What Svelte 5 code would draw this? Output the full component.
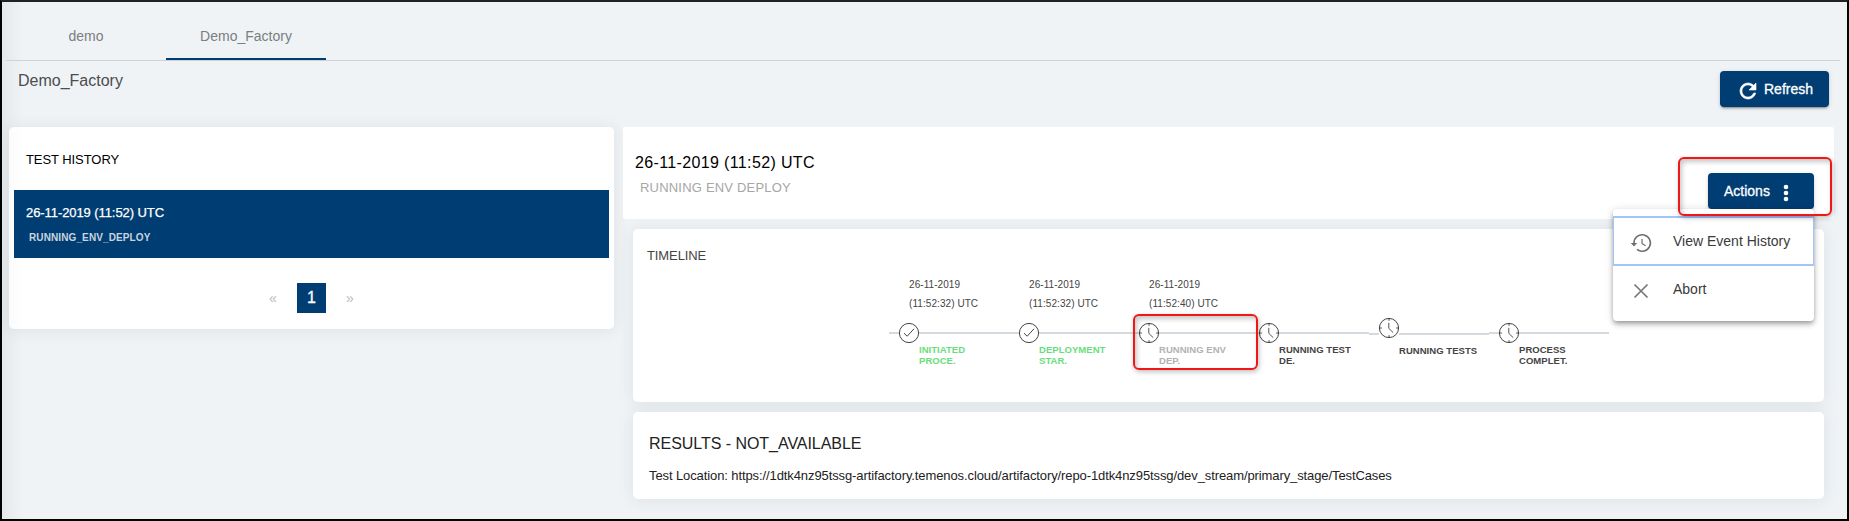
<script>
  const tabs = [
    { name: 'demo', active: false },
    { name: 'Demo_Factory', active: true }
  ];
  const steps = [
    { date: '26-11-2019', time: '(11:52:32) UTC', lines: ['INITIATED', 'PROCE.'], state: 'done' },
    { date: '26-11-2019', time: '(11:52:32) UTC', lines: ['DEPLOYMENT', 'STAR.'], state: 'done' },
    { date: '26-11-2019', time: '(11:52:40) UTC', lines: ['RUNNING ENV', 'DEP.'], state: 'running' },
    { date: '', time: '', lines: ['RUNNING TEST', 'DE.'], state: 'pending' },
    { date: '', time: '', lines: ['RUNNING TESTS'], state: 'pending' },
    { date: '', time: '', lines: ['PROCESS', 'COMPLET.'], state: 'pending' }
  ];
</script>

<div class="page">
  <nav class="tabs">
    {#each tabs as tab}
      <div class="tab" class:active={tab.active}>{tab.name}</div>
    {/each}
  </nav>

  <header class="titlebar">
    <h1>Demo_Factory</h1>
    <button class="btn refresh">
      <svg width="24" height="24" viewBox="0 0 24 24"><path fill="#fff" d="M17.65 6.35C16.2 4.9 14.21 4 12 4c-4.42 0-7.99 3.58-7.99 8s3.57 8 7.99 8c3.73 0 6.84-2.55 7.73-6h-2.08c-.82 2.33-3.04 4-5.65 4-3.31 0-6-2.69-6-6s2.69-6 6-6c1.66 0 3.14.69 4.22 1.78L13 11h7V4l-2.35 2.35z" stroke="#fff" stroke-width=".6" /></svg>
      <span>Refresh</span>
    </button>
  </header>

  <main class="columns">
    <section class="card history">
      <h2>TEST HISTORY</h2>
      <div class="entry">
        <div class="entry-date">26-11-2019 (11:52) UTC</div>
        <div class="entry-state">RUNNING_ENV_DEPLOY</div>
      </div>
      <div class="pager">
        <span class="arrow">«</span>
        <span class="current">1</span>
        <span class="arrow">»</span>
      </div>
    </section>

    <section class="details">
      <div class="summary">
        <div class="summary-text">
          <div class="run-date">26-11-2019 (11:52) UTC</div>
          <div class="run-state">RUNNING ENV DEPLOY</div>
        </div>
        <div class="actions">
          <button class="btn open-menu">
            <span>Actions</span>
            <svg width="24" height="24" viewBox="0 0 24 24" fill="#fff"><circle cx="12" cy="6" r="2.3" /><circle cx="12" cy="12" r="2.3" /><circle cx="12" cy="18" r="2.3" /></svg>
          </button>
          <div class="menu">
            <div class="item focused">
              <svg width="24" height="24" viewBox="0 0 24 24" fill="none" stroke="#6f6f6f" stroke-width="1.6"><path d="M5 12.5V11.8A8.2 8.2 0 1 1 8 18.3" /><path d="M1.8 12h6.4L5 15.4z" fill="#6f6f6f" stroke="none" /><path d="M13 8v4.5l3.6 2.2" stroke-width="1.2" /></svg>
              <span>View Event History</span>
            </div>
            <div class="item abort">
              <svg width="24" height="24" viewBox="0 0 24 24" fill="none" stroke="#777" stroke-width="1.7"><path d="M5.5 5.5l13 13M18.5 5.5l-13 13" /></svg>
              <span>Abort</span>
            </div>
          </div>
          <div class="marker actions-marker"></div>
        </div>
      </div>

      <div class="card timeline">
        <h3>TIMELINE</h3>
        <div class="steps">
          {#each steps as step}
            <div class="step {step.state}" class:single={step.lines.length === 1}>
              <div class="stamp">{step.date}<br />{step.time}</div>
              <div class="rail">
                <svg width="22" height="22" viewBox="0 0 22 22" fill="none" stroke="#444" stroke-width="1">
                  <circle cx="11" cy="11" r="9.6" fill="#fff" />
                  {#if step.state === 'done'}
                    <path d="M6 11.2l3.2 3L16 6.8" />
                  {:else}
                    <path d="M11 1.5v2.3M11 18.2v2.3M1.5 11h2.3M18.2 11h2.3" />
                    <path d="M10.8 5.8v5.6l4.4 4.2" stroke="#555" />
                  {/if}
                </svg>
              </div>
              <div class="label">
                {#each step.lines as line}<div>{line}</div>{/each}
              </div>
              {#if step.state === 'running'}<div class="marker step-marker"></div>{/if}
            </div>
          {/each}
        </div>
      </div>

      <div class="card results">
        <h3>RESULTS - NOT_AVAILABLE</h3>
        <p>Test Location: https://1dtk4nz95tssg-artifactory.temenos.cloud/artifactory/repo-1dtk4nz95tssg/dev_stream/primary_stage/TestCases</p>
      </div>
    </section>
  </main>
</div>

<style>
  :global(body) { margin: 0; overflow: hidden; }
  * { box-sizing: border-box; }
  h1, h2, h3, p { margin: 0; font-weight: 400; }
  .page {
    width: 1849px;
    height: 521px;
    border: 2px solid #000;
    border-top-color: #222;
    background: linear-gradient(90deg, #e5e8ea 0, #eff3f6 20px);
    font-family: "Liberation Sans", Arial, sans-serif;
    color: #000;
  }
  .tabs {
    display: flex;
    height: 59px;
    margin: 0 7px 0 4px;
    border-bottom: 1px solid #cdd3d8;
  }
  .tab {
    width: 160px;
    height: 58px;
    text-align: center;
    font-size: 14px;
    line-height: 68px;
    color: #7b7e80;
  }
  .active { border-bottom: 2px solid #003d73; }
  .titlebar {
    display: flex;
    justify-content: space-between;
    height: 66px;
    padding: 10px 18px 0 16px;
  }
  h1 { font-size: 16px; line-height: 19px; color: #4b4d4f; }
  .btn {
    display: flex;
    align-items: center;
    height: 36px;
    border: 0;
    border-radius: 4px;
    background: #003d73;
    color: #fff;
    font: 14px "Liberation Sans", Arial, sans-serif;
    -webkit-text-stroke: 0.3px #fff;
    box-shadow: 0 3px 1px -2px rgba(0, 0, 0, 0.2), 0 2px 2px rgba(0, 0, 0, 0.14), 0 1px 5px rgba(0, 0, 0, 0.12);
  }
  .refresh { width: 109px; padding: 0 0 0 16px; gap: 4px; }
  .refresh svg { margin-top: 4px; }
  .columns { display: flex; align-items: flex-start; gap: 9px; padding-left: 7px; }
  .card {
    background: #fff;
    border-radius: 5px;
    box-shadow: 0 1px 15px 1px rgba(39, 52, 58, 0.08);
  }
  .history {
    width: 605px;
    height: 202px;
    padding: 0 5px;
    background: linear-gradient(90deg, #fbfbfb 0, #fff 14px);
  }
  h2 { height: 63px; padding-left: 12px; font-size: 13px; line-height: 65px; letter-spacing: -0.07px; }
  .entry { height: 68px; padding: 15px 12px 0; background: #003d73; color: #fff; }
  .entry-date { font-size: 13px; line-height: 16px; letter-spacing: -0.08px; -webkit-text-stroke: 0.25px #fff; }
  .entry-state { padding: 11px 0 0 3px; font-size: 10px; line-height: 12px; letter-spacing: 0.11px; font-weight: 700; color: #c8d4df; }
  .pager { display: flex; justify-content: center; align-items: center; gap: 20px; height: 80px; }
  .arrow { width: 8px; color: #bbb; font-size: 14px; }
  .current {
    width: 29px;
    height: 30px;
    background: #003d73;
    color: #fff;
    text-align: center;
    font-size: 16px;
    line-height: 29px;
    -webkit-text-stroke: 0.3px #fff;
  }
  .details { width: 1211px; }
  .summary {
    display: flex;
    justify-content: space-between;
    height: 92px;
    padding: 26px 20px 0 12px;
    background: #fff;
    border-radius: 2px;
  }
  .run-date { font-size: 16px; line-height: 20px; letter-spacing: 0.36px; }
  .run-state { padding: 7px 0 0 5px; font-size: 13px; line-height: 16px; letter-spacing: 0.2px; color: #a6a6a6; }
  .actions { position: relative; margin-top: 20px; height: 36px; }
  .open-menu { width: 106px; padding: 0 0 0 16px; gap: 4px; }
  .open-menu svg { margin-top: 4px; }
  .menu {
    position: absolute;
    z-index: 2;
    top: 36px;
    right: 0;
    width: 201px;
    height: 112px;
    padding-top: 7px;
    background: #fff;
    border-radius: 4px;
    box-shadow: 0 2px 4px -1px rgba(0, 0, 0, 0.25), 0 4px 5px rgba(0, 0, 0, 0.16), 0 1px 10px rgba(0, 0, 0, 0.14);
  }
  .item {
    display: flex;
    align-items: center;
    gap: 20px;
    height: 48px;
    padding: 0 16px;
    font-size: 14px;
    color: #3a3a3a;
  }
  .item svg { margin-top: 4px; }
  .focused { height: 50px; padding: 0 15px; border: solid #a3c3fb; border-width: 2px 1px; }
  .abort { height: 46px; }
  .marker {
    position: absolute;
    z-index: 3;
    border: 2px solid #f01717;
    border-radius: 6px;
    box-shadow: 1px 2px 5px rgba(0, 0, 0, 0.25), inset 2px 3px 5px rgba(0, 0, 0, 0.22);
  }
  .actions-marker { left: -30px; top: -16px; width: 154px; height: 59px; }
  .step-marker { left: 4px; top: 39px; width: 125px; height: 56px; }
  .timeline { margin: 10px 10px 0; height: 173px; padding: 19px 14px 0; }
  .timeline h3 { font-size: 13px; line-height: 16px; letter-spacing: -0.1px; color: #444; }
  .steps { display: flex; width: 720px; margin: 11px 0 0 242px; }
  .step { position: relative; width: 120px; }
  .stamp { height: 47px; padding-left: 20px; font-size: 10px; line-height: 19px; letter-spacing: 0.07px; color: #444; }
  .rail {
    height: 22px;
    padding-left: 9px;
    background: linear-gradient(#d5dade, #d5dade) 0 10px / 100% 2px no-repeat;
  }
  .rail svg { display: block; }
  .single .rail {
    background: linear-gradient(#fff, #fff) 10px 0 / 20px 100% no-repeat, linear-gradient(#d5dade, #d5dade) 0 11px / 100% 2px no-repeat;
  }
  .single svg { position: relative; top: -5px; }
  .label { padding: 0 0 0 30px; font-size: 9.5px; line-height: 11px; letter-spacing: 0.04px; font-weight: 700; color: #444; }
  .single .label { padding-top: 1px; }
  .done .label { color: #67de7b; }
  .running .label { color: #b2b2b2; }
  .results { margin: 10px 10px 0; height: 87px; padding: 22px 15px 0 16px; }
  .results h3 { font-size: 16px; line-height: 20px; letter-spacing: -0.04px; color: #222; }
  .results p { padding-top: 14px; font-size: 13px; line-height: 16px; letter-spacing: -0.1px; color: #222; white-space: nowrap; }
</style>
